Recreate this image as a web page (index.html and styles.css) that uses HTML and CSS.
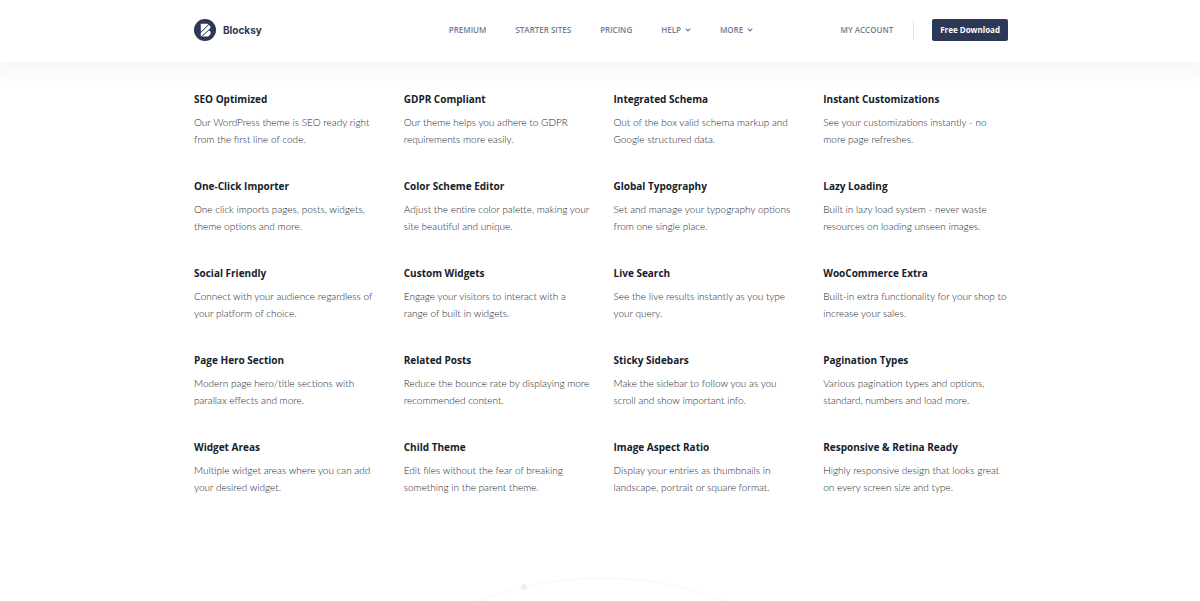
FILE: index.html
```html
<!DOCTYPE html>
<html lang="en">
<head>
<meta charset="utf-8">
<meta name="viewport" content="width=device-width, initial-scale=1">
<title>Blocksy</title>
<link rel="stylesheet" href="styles.css">
</head>
<body>
<header class="site-header">
  <div class="container header-row">
    <a class="brand" href="#">
      <svg class="brand-mark" viewBox="0 0 22 22" aria-hidden="true">
        <circle cx="11" cy="11" r="11" fill="#2d3857"/>
        <path d="M6.800 4.700h6.600l2.900 2.600v2.200l-1.500 1.500 1.800 1.800v2.300L14.200 17.400H6.800z" fill="#fff"/>
        <path d="M6 14.200 15 5.200M7.200 17.800 17 9.200" stroke="#2d3857" stroke-width="1" fill="none"/>
      </svg>
      <span>Blocksy</span>
    </a>
    <nav class="main-nav" aria-label="Main">
      <a href="#">PREMIUM</a>
      <a href="#">STARTER SITES</a>
      <a href="#">PRICING</a>
      <a href="#">HELP <svg class="chevron" viewBox="0 0 6 4" aria-hidden="true"><path d="M.7.7 3 3 5.300.7"/></svg></a>
      <a href="#">MORE <svg class="chevron" viewBox="0 0 6 4" aria-hidden="true"><path d="M.7.7 3 3 5.300.7"/></svg></a>
    </nav>
    <div class="actions">
      <a class="account" href="#">MY ACCOUNT</a>
      <button class="download" type="button">Free Download</button>
    </div>
  </div>
</header>
<main>
  <section class="container features">
    <article><h3>SEO Optimized</h3><p>Our WordPress theme is SEO ready right<br>from the first line of code.</p></article>
    <article><h3>GDPR Compliant</h3><p>Our theme helps you adhere to GDPR<br>requirements more easily.</p></article>
    <article><h3>Integrated Schema</h3><p>Out of the box valid schema markup and<br>Google structured data.</p></article>
    <article><h3>Instant Customizations</h3><p>See your customizations instantly - no<br>more page refreshes.</p></article>
    <article><h3>One-Click Importer</h3><p>One click imports pages, posts, widgets,<br>theme options and more.</p></article>
    <article><h3>Color Scheme Editor</h3><p>Adjust the entire color palette, making your<br>site beautiful and unique.</p></article>
    <article><h3>Global Typography</h3><p>Set and manage your typography options<br>from one single place.</p></article>
    <article><h3>Lazy Loading</h3><p>Built in lazy load system - never waste<br>resources on loading unseen images.</p></article>
    <article><h3>Social Friendly</h3><p>Connect with your audience regardless of<br>your platform of choice.</p></article>
    <article><h3>Custom Widgets</h3><p>Engage your visitors to interact with a<br>range of built in widgets.</p></article>
    <article><h3>Live Search</h3><p>See the live results instantly as you type<br>your query.</p></article>
    <article><h3>WooCommerce Extra</h3><p>Built-in extra functionality for your shop to<br>increase your sales.</p></article>
    <article><h3>Page Hero Section</h3><p>Modern page hero/title sections with<br>parallax effects and more.</p></article>
    <article><h3>Related Posts</h3><p>Reduce the bounce rate by displaying more<br>recommended content.</p></article>
    <article><h3>Sticky Sidebars</h3><p>Make the sidebar to follow you as you<br>scroll and show important info.</p></article>
    <article><h3>Pagination Types</h3><p>Various pagination types and options,<br>standard, numbers and load more.</p></article>
    <article><h3>Widget Areas</h3><p>Multiple widget areas where you can add<br>your desired widget.</p></article>
    <article><h3>Child Theme</h3><p>Edit files without the fear of breaking<br>something in the parent theme.</p></article>
    <article><h3>Image Aspect Ratio</h3><p>Display your entries as thumbnails in<br>landscape, portrait or square format.</p></article>
    <article><h3>Responsive &amp; Retina Ready</h3><p>Highly responsive design that looks great<br>on every screen size and type.</p></article>
  </section>
  <svg class="orbit" viewBox="0 0 260 24" aria-hidden="true">
    <circle cx="132" cy="341" r="340" fill="none" stroke="#f7f7fd"/>
    <circle cx="54" cy="10" r="3" fill="#efeffb"/>
  </svg>
</main>
</body>
</html>
```
FILE: styles.css
```css
* {
  box-sizing: border-box;
}

body {
  margin: 0;
  background: #fff;
  color: #1c2630;
  font-family: Lato, "Open Sans", sans-serif;
  font-size: 10px;
}

a {
  color: inherit;
  text-decoration: none;
}

.container {
  width: 100%;
  max-width: 848px;
  margin: 0 auto;
  padding: 0 16px 0 18px;
}

.site-header {
  background: #fff;
  box-shadow: 0 6px 14px 6px rgba(40, 50, 50, 0.04);
}

.header-row {
  display: grid;
  grid-template-columns: 1fr auto 1fr;
  align-items: center;
  padding-top: 19px;
  padding-bottom: 21px;
}

.brand {
  display: flex;
  align-items: center;
  gap: 7px;
  color: #2d3857;
  font-family: Inter, sans-serif;
  font-size: 10px;
  font-weight: 700;
}

.brand-mark {
  width: 22px;
  height: 22px;
}

.main-nav {
  display: flex;
  gap: 29px;
  color: #727b90;
  font: 600 8px/20px "Open Sans", "Noto Sans", sans-serif;
}

.main-nav a {
  display: flex;
  align-items: center;
  gap: 4px;
}

.chevron {
  width: 6px;
  height: 4px;
  fill: none;
  stroke: currentColor;
  stroke-width: 1.2;
}

.actions {
  display: flex;
  align-items: center;
  justify-content: flex-end;
}

.account {
  padding-right: 20px;
  border-right: 1px solid #e2e5e9;
  color: #727b90;
  font: 600 8px/20px "Open Sans", "Noto Sans", sans-serif;
}

.download {
  margin-left: 18px;
  padding: 0 8px;
  border: 0;
  border-radius: 2px;
  background: #2d3857;
  color: #fff;
  font: 700 8px/22px "Open Sans", "Noto Sans", sans-serif;
}

.features {
  display: grid;
  grid-template-columns: repeat(4, minmax(0, 1fr));
  gap: 30px 25px;
  padding-top: 29px;
}

.features h3 {
  margin: 0 0 7px;
  color: #14212b;
  font: 700 10px/16px "Open Sans", "Noto Sans", sans-serif;
}

.features p {
  margin: 0;
  font-weight: 300;
  line-height: 17px;
  white-space: nowrap;
}

.orbit {
  display: block;
  width: 260px;
  height: 24px;
  margin: 81px auto 0;
}
```
